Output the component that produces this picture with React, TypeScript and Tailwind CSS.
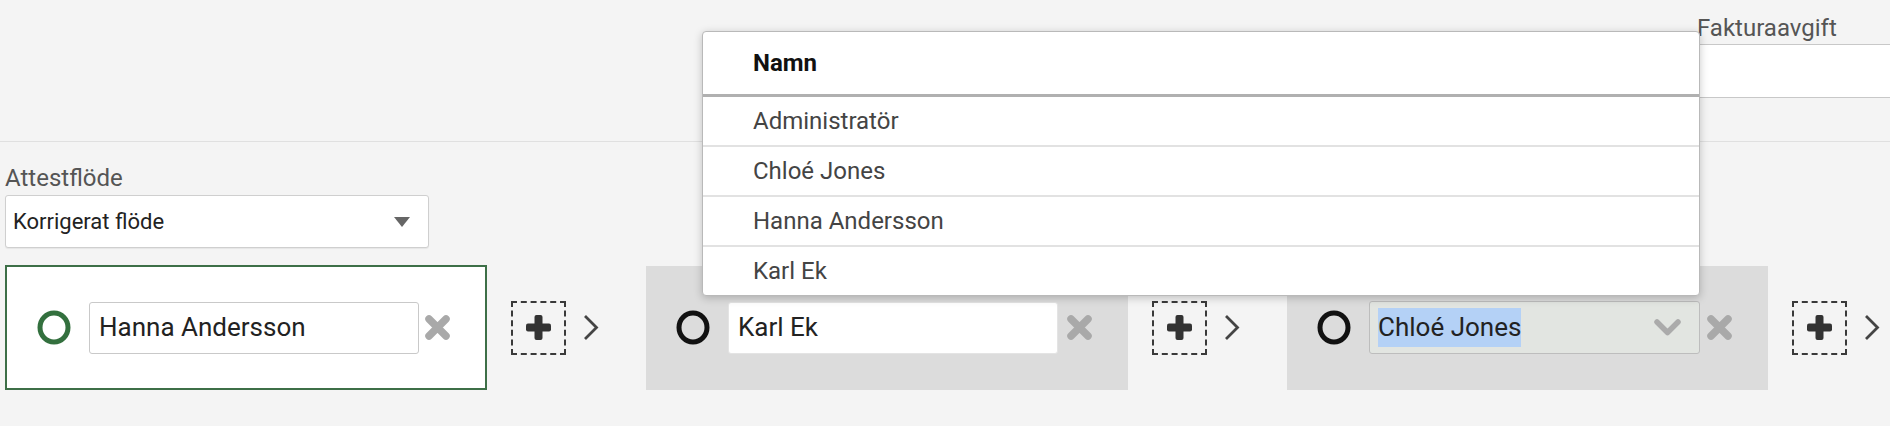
import React from "react";

const people = ["Administratör", "Chloé Jones", "Hanna Andersson", "Karl Ek"];

function Ring({ color, stroke }: { color: string; stroke: number }) {
  return (
    <svg width="34" height="35" viewBox="0 0 34 35" className="shrink-0">
      <ellipse cx="17" cy="17.5" rx={17 - stroke / 2 - 0.5} ry={17.5 - stroke / 2 - 0.5} fill="none" stroke={color} strokeWidth={stroke} />
    </svg>
  );
}

function RemoveIcon() {
  return (
    <svg width="27" height="27" viewBox="0 0 27 27" className="shrink-0">
      <path d="M5 5 L22 22 M22 5 L5 22" stroke="#a9a9a9" strokeWidth="7.5" strokeLinecap="round" />
    </svg>
  );
}

function Connector() {
  return (
    <>
      <div className="ml-[24px] flex h-[54px] w-[55px] shrink-0 items-center justify-center border-2 border-dashed border-[#3a3a3a]">
        <svg width="25" height="25" viewBox="0 0 25 25">
          <rect x="0" y="8.5" width="25" height="8" rx="2" fill="#333" />
          <rect x="8.5" y="0" width="8" height="25" rx="2" fill="#333" />
        </svg>
      </div>
      <svg width="16" height="27" viewBox="0 0 16 27" className="ml-[17px] shrink-0">
        <path d="M2 2 L13.5 13.5 L2 25" fill="none" stroke="#444" strokeWidth="2.8" />
      </svg>
    </>
  );
}

export default function App() {
  return (
    <div className="relative h-[426px] w-[1890px] overflow-hidden bg-[#f4f4f4] font-['Roboto',sans-serif]">
      {/* top part with invoice fee field */}
      <div className="flex h-[142px] border-b border-[#e0e0e0]">
        <div className="flex-1" />
        <div className="w-[193px] pt-[13px]">
          <div className="text-[24px] leading-[30px] text-[#555]">Fakturaavgift</div>
          <div className="mt-[1px] h-[54px] border-y border-[#c8c8c8] bg-white" />
        </div>
      </div>

      {/* attest flow */}
      <div className="px-[5px] pt-[21px]">
        <div className="text-[24px] leading-[30px] text-[#555]">Attestflöde</div>
        <div className="mt-[2px] flex h-[53px] w-[424px] items-center justify-between rounded-[3px] border border-[#cfcfcf] bg-white pl-[7px] pr-[18px] shadow-[0_1px_1px_rgba(0,0,0,0.06)]">
          <span className="text-[22px] text-[#222]">Korrigerat flöde</span>
          <svg width="16" height="10" viewBox="0 0 16 10">
            <polygon points="0,0 16,0 8,10" fill="#666" />
          </svg>
        </div>

        <div className="mt-[17px] flex items-center">
          {/* step 1 */}
          <div className="flex h-[125px] w-[482px] shrink-0 items-center border-2 border-[#3d6f47] bg-white pl-[30px]">
            <Ring color="#33703e" stroke={5} />
            <div className="ml-[18px] flex h-[52px] w-[330px] items-center rounded-[3px] border border-[#c9c9c9] bg-white pl-[9px] text-[26px] text-[#222]">
              Hanna Andersson
            </div>
            <div className="ml-[5px]">
              <RemoveIcon />
            </div>
          </div>
          <Connector />

          {/* step 2 */}
          <div className="ml-[47px] flex h-[124px] w-[482px] shrink-0 items-center bg-[#dcdcdc] pl-[30px]">
            <Ring color="#111" stroke={5} />
            <div className="ml-[18px] flex h-[52px] w-[330px] items-center rounded-[3px] border border-[#e4e4e4] bg-white pl-[9px] text-[26px] text-[#222]">
              Karl Ek
            </div>
            <div className="ml-[8px]">
              <RemoveIcon />
            </div>
          </div>
          <Connector />

          {/* step 3 */}
          <div className="ml-[47px] flex h-[124px] w-[481px] shrink-0 items-center bg-[#dcdcdc] pl-[30px]">
            <Ring color="#111" stroke={5} />
            <div className="ml-[18px] flex h-[53px] w-[331px] items-center justify-between rounded-[3px] border border-[#bdbdbd] bg-[#e2e5e1] pl-[8px] pr-[17px] text-[26px] text-[#222]">
              <span className="bg-[#b4d1f6]">Chloé Jones</span>
              <svg width="29" height="19" viewBox="0 0 29 19">
                <path d="M4 4 L14.5 14.5 L25 4" fill="none" stroke="#ababab" strokeWidth="5.5" strokeLinecap="round" strokeLinejoin="round" />
              </svg>
            </div>
            <div className="ml-[6px]">
              <RemoveIcon />
            </div>
          </div>
          <Connector />
        </div>
      </div>

      {/* autocomplete dropdown */}
      <div className="absolute left-[702px] top-[31px] w-[998px] overflow-hidden rounded-[4px] border border-[#b9b9b9] bg-white shadow-[0_2px_8px_rgba(0,0,0,0.22)]">
        <div className="flex h-[65px] items-center border-b-[3px] border-[#b0b0b0] pl-[50px] text-[24px] font-bold text-[#111]">
          Namn
        </div>
        {people.map((name, i) => (
          <div
            key={name}
            className={
              i < people.length - 1
                ? "flex h-[50px] items-center border-b-2 border-[#e2e2e2] pl-[50px] text-[24px] text-[#444]"
                : "flex h-[48px] items-center pl-[50px] text-[24px] text-[#444]"
            }
          >
            {name}
          </div>
        ))}
      </div>
    </div>
  );
}
